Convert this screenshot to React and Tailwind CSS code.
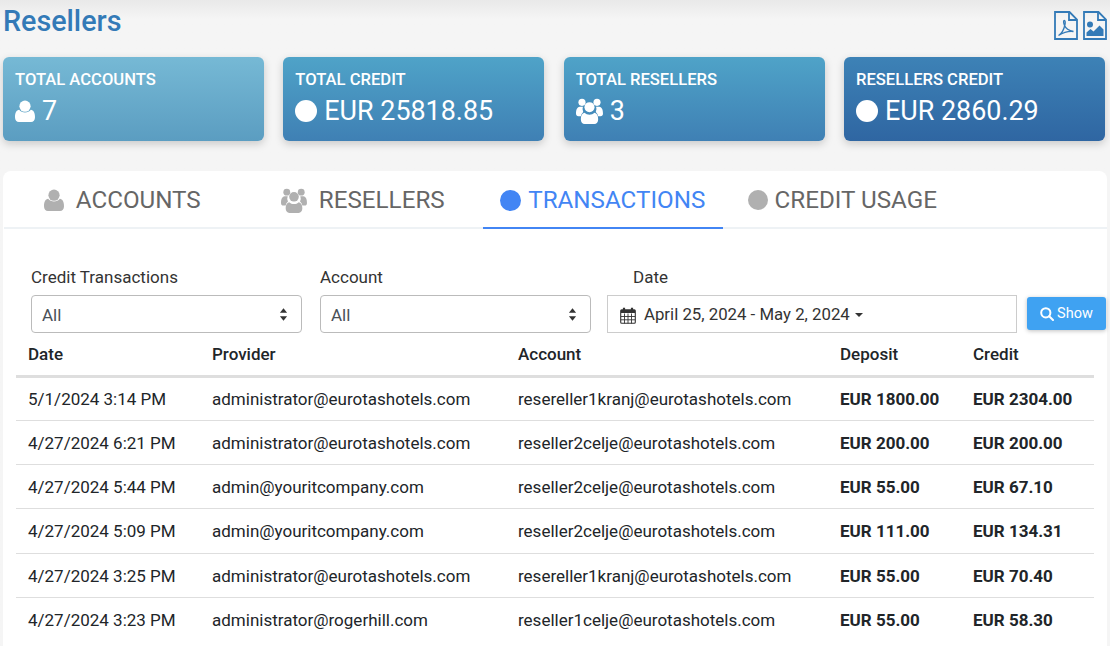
import React from "react";

const User = ({ className }) => (
  <svg viewBox="0 0 20 22" className={className} fill="currentColor">
    <circle cx="10" cy="6.2" r="5.6" />
    <path d="M4.2 9.8C5.6 11.6 7.6 12.6 10 12.6s4.4-1 5.8-2.8c2.8.3 4.2 3 4.2 7.4 0 3-1.6 4.8-4 4.8H4c-2.4 0-4-1.8-4-4.8 0-4.4 1.4-7.100 4.2-7.400z" />
  </svg>
);

const Users = ({ className }) => (
  <svg viewBox="0 0 28 27" className={className} fill="currentColor">
    <circle cx="6.200" cy="4.500" r="3.700" />
    <circle cx="21.800" cy="4.500" r="3.700" />
    <path d="M4 9h3.200A6.500 6.500 0 0 0 7.500 14.600 7 7 0 0 0 5 19H2.500C1 19 0 18 0 16.400 0 12.500.8 9.400 4 9z" />
    <path d="M24 9h-3.200a6.500 6.500 0 0 1-.3 5.600 7 7 0 0 1 2.500 4.400h2.500c1.500 0 2.500-1 2.500-2.600C28 12.500 27.200 9.400 24 9z" />
    <circle cx="14" cy="9.500" r="5.200" />
    <path d="M8.800 15.400c1.400 1.300 3.200 2 5.200 2s3.800-.7 5.200-2c2.500.5 3.800 3 3.800 6.600 0 3-1.600 5-4 5H9c-2.400 0-4-2-4-5 0-3.600 1.300-6.100 3.800-6.600z" />
  </svg>
);

const Pdf = ({ className }) => (
  <svg viewBox="0 0 24 29" className={className} fill="none" stroke="currentColor">
    <path d="M1 1h14.500L23 8.500V28H1z" strokeWidth="1.800" />
    <path d="M15 1v8h8" strokeWidth="1.800" />
    <path d="M4.500 24.500c3-1.500 5.500-6.500 6.500-11 .5-2.500.2-4-.7-4s-1 2 0 4.500c1.200 3 4 5.500 9.200 6.500-4-.5-9.500.5-15 4z" strokeWidth="1.300" />
  </svg>
);

const ImageFile = ({ className }) => (
  <svg viewBox="0 0 24 29" className={className} fill="none" stroke="currentColor">
    <path d="M1 1h14.500L23 8.500V28H1z" strokeWidth="1.800" />
    <path d="M15 1v8h8" strokeWidth="1.800" />
    <circle cx="7" cy="13.500" r="3" fill="currentColor" stroke="none" />
    <path d="M3.500 25v-3.500l4-3.500 3 2.500 6-6 4 4V25z" fill="currentColor" stroke="none" />
  </svg>
);

const Calendar = ({ className }) => (
  <svg viewBox="0 0 16 17" className={className} fill="none" stroke="#333">
    <rect x="0.700" y="2.700" width="14.600" height="13.600" rx="1" strokeWidth="1.100" />
    <path d="M1 4.500h14" strokeWidth="3" />
    <path d="M1 9.500h14M1 12.800h14M4.500 6.500v10M8 6.500v10M11.500 6.500v10" strokeWidth="0.900" />
    <path d="M4 .8v3.200M12 .8v3.200" strokeWidth="2.200" />
  </svg>
);

const Spinner = () => (
  <svg viewBox="0 0 10 16" className="w-[9px] h-[15px]" fill="#333">
    <path d="M5 1l4 5H1zM5 15l-4-5h8z" />
  </svg>
);

const Search = () => (
  <svg viewBox="0 0 14 14" className="w-[14px] h-[14px]" fill="none" stroke="#fff" strokeWidth="2">
    <circle cx="5.800" cy="5.800" r="4.600" />
    <path d="M9.200 9.200l3.800 3.800" strokeLinecap="round" />
  </svg>
);

const stats = [
  { label: "TOTAL ACCOUNTS", value: "7", icon: "user", bg: "bg-gradient-to-b from-[#76b9d5] to-[#5b9dc1]" },
  { label: "TOTAL CREDIT", value: "EUR 25818.85", icon: "dot", bg: "bg-gradient-to-b from-[#4fa3c8] to-[#3f80b4]" },
  { label: "TOTAL RESELLERS", value: "3", icon: "users", bg: "bg-gradient-to-b from-[#4fa3c8] to-[#3f80b4]" },
  { label: "RESELLERS CREDIT", value: "EUR 2860.29", icon: "dot", bg: "bg-gradient-to-b from-[#3d82b6] to-[#2f66a2]" },
];

const rows = [
  ["5/1/2024 3:14 PM", "administrator@eurotashotels.com", "resereller1kranj@eurotashotels.com", "EUR 1800.00", "EUR 2304.00"],
  ["4/27/2024 6:21 PM", "administrator@eurotashotels.com", "reseller2celje@eurotashotels.com", "EUR 200.00", "EUR 200.00"],
  ["4/27/2024 5:44 PM", "admin@youritcompany.com", "reseller2celje@eurotashotels.com", "EUR 55.00", "EUR 67.10"],
  ["4/27/2024 5:09 PM", "admin@youritcompany.com", "reseller2celje@eurotashotels.com", "EUR 111.00", "EUR 134.31"],
  ["4/27/2024 3:25 PM", "administrator@eurotashotels.com", "resereller1kranj@eurotashotels.com", "EUR 55.00", "EUR 70.40"],
  ["4/27/2024 3:23 PM", "administrator@rogerhill.com", "reseller1celje@eurotashotels.com", "EUR 55.00", "EUR 58.30"],
];

const tabs = [
  { label: "ACCOUNTS", icon: <User className="w-[20px] h-[22px] text-[#b0b0b0]" />, cls: "gap-[12px] pr-[3px]" },
  { label: "RESELLERS", icon: <Users className="w-[26px] h-[25px] text-[#b0b0b0]" />, cls: "gap-[12px] pr-[1px]" },
  { label: "TRANSACTIONS", icon: <span className="block w-[21px] h-[21px] rounded-full bg-[#4285f4]" />, cls: "gap-[7px]", active: true },
  { label: "CREDIT USAGE", icon: <span className="block w-[20px] h-[20px] rounded-full bg-[#b0b0b0]" />, cls: "gap-[7px]" },
];

const SelectBox = ({ className }) => (
  <div className={`h-[38px] rounded-[4px] border border-[#bbb] bg-white pl-[10px] pr-[13px] flex items-center justify-between text-[17px] text-[#495057] ${className}`}>
    <span className="pt-[3px]">All</span>
    <Spinner />
  </div>
);

export default function App() {
  return (
    <div className="h-[646px] w-[1110px] overflow-hidden bg-gradient-to-b from-[#e9e9e9] via-[#f5f5f5] via-[3%] to-[#f5f5f5] font-['Roboto',sans-serif] pt-[3px]">
      <div className="flex justify-between items-start pl-[3px] pr-[3px] h-[54px]">
        <h1 className="text-[28.700px] leading-[37px] font-medium text-[#337ab7]">Resellers</h1>
        <div className="flex gap-[5px] mt-[8px] text-[#337ab7]">
          <Pdf className="w-[24px] h-[29px]" />
          <ImageFile className="w-[24px] h-[29px]" />
        </div>
      </div>

      <div className="grid grid-cols-4 gap-x-[19.300px] pl-[3px] pr-[5px]">
        {stats.map((s) => (
          <div key={s.label} className={`h-[84px] rounded-[6px] shadow-[0_3px_8px_rgba(0,0,0,0.18)] text-white pl-[12px] pt-[13px] ${s.bg}`}>
            <div className="text-[16.600px] leading-[20px] font-medium">{s.label}</div>
            <div className="flex items-center mt-[5px] h-[32px]">
              {s.icon === "user" && <User className="w-[20px] h-[22px] mr-[7px]" />}
              {s.icon === "users" && <Users className="w-[27px] h-[26px] mr-[7px]" />}
              {s.icon === "dot" && <span className="block w-[22px] h-[22px] rounded-full bg-white mr-[7px]" />}
              <span className="text-[26.900px] leading-[32px]">{s.value}</span>
            </div>
          </div>
        ))}
      </div>

      <div className="mt-[30px] ml-[3px] mr-[3px] h-[500px] rounded-t-[8px] bg-white">
        <div className="flex ml-[1px] border-b-2 border-[#eef2f5] h-[58px]">
          {tabs.map((t) => (
            <div key={t.label} className={`w-[239.500px] h-[58px] flex items-center justify-center text-[24.200px] ${t.cls} ${t.active ? "text-[#4285f4] border-b-2 border-[#4285f4] pt-[2px]" : "text-[#666]"}`}>
              {t.icon}
              <span>{t.label}</span>
            </div>
          ))}
        </div>

        <div className="flex items-start pl-[28px] mt-[36px] text-[#333]">
          <div className="w-[271px] mr-[18px]">
            <div className="text-[17px] leading-[24px] mb-[6px]">Credit Transactions</div>
            <SelectBox />
          </div>
          <div className="w-[271px] mr-[16px]">
            <div className="text-[17px] leading-[24px] mb-[6px]">Account</div>
            <SelectBox />
          </div>
          <div className="w-[410px] mr-[10px]">
            <div className="text-[17px] leading-[24px] mb-[6px] pl-[26px]">Date</div>
            <div className="h-[38px] border border-[#ccc] bg-white flex items-center pl-[12px] text-[16.800px] text-[#333]">
              <Calendar className="w-[16px] h-[17px] mr-[8px] mt-[2px]" />
              <span className="pt-[1px]">April 25, 2024 - May 2, 2024</span>
              <span className="ml-[5px] mt-[2px] border-x-[4px] border-x-transparent border-t-[4px] border-t-[#333]" />
            </div>
          </div>
          <button className="mt-[32px] w-[79px] h-[33px] rounded-[3px] bg-[#3fa2f2] shadow-[0_1px_4px_rgba(0,0,0,0.25)] text-white text-[14.500px] flex items-center justify-center gap-[3px]">
            <Search />
            <span>Show</span>
          </button>
        </div>

        <table className="ml-[13px] w-[1078px] table-fixed border-collapse text-[17px] text-[#212529]">
          <thead>
            <tr className="h-[43px] border-b-[3px] border-[#dedede] text-left">
              <th className="w-[184px] pl-[12px] pt-[2px] font-medium">Date</th>
              <th className="w-[306px] pl-[12px] pt-[2px] font-medium">Provider</th>
              <th className="w-[322px] pl-[12px] pt-[2px] font-medium">Account</th>
              <th className="w-[133px] pl-[12px] pt-[2px] font-medium">Deposit</th>
              <th className="pl-[12px] pt-[2px] font-medium">Credit</th>
            </tr>
          </thead>
          <tbody>
            {rows.map((r, i) => (
              <tr key={i} className="h-[44.300px] border-b border-[#dedede] last:border-b-0">
                <td className="pl-[12px] pt-[2px]">{r[0]}</td>
                <td className="pl-[12px] pt-[2px]">{r[1]}</td>
                <td className="pl-[12px] pt-[2px]">{r[2]}</td>
                <td className="pl-[12px] pt-[2px] font-bold">{r[3]}</td>
                <td className="pl-[12px] pt-[2px] font-bold">{r[4]}</td>
              </tr>
            ))}
          </tbody>
        </table>
      </div>
    </div>
  );
}
